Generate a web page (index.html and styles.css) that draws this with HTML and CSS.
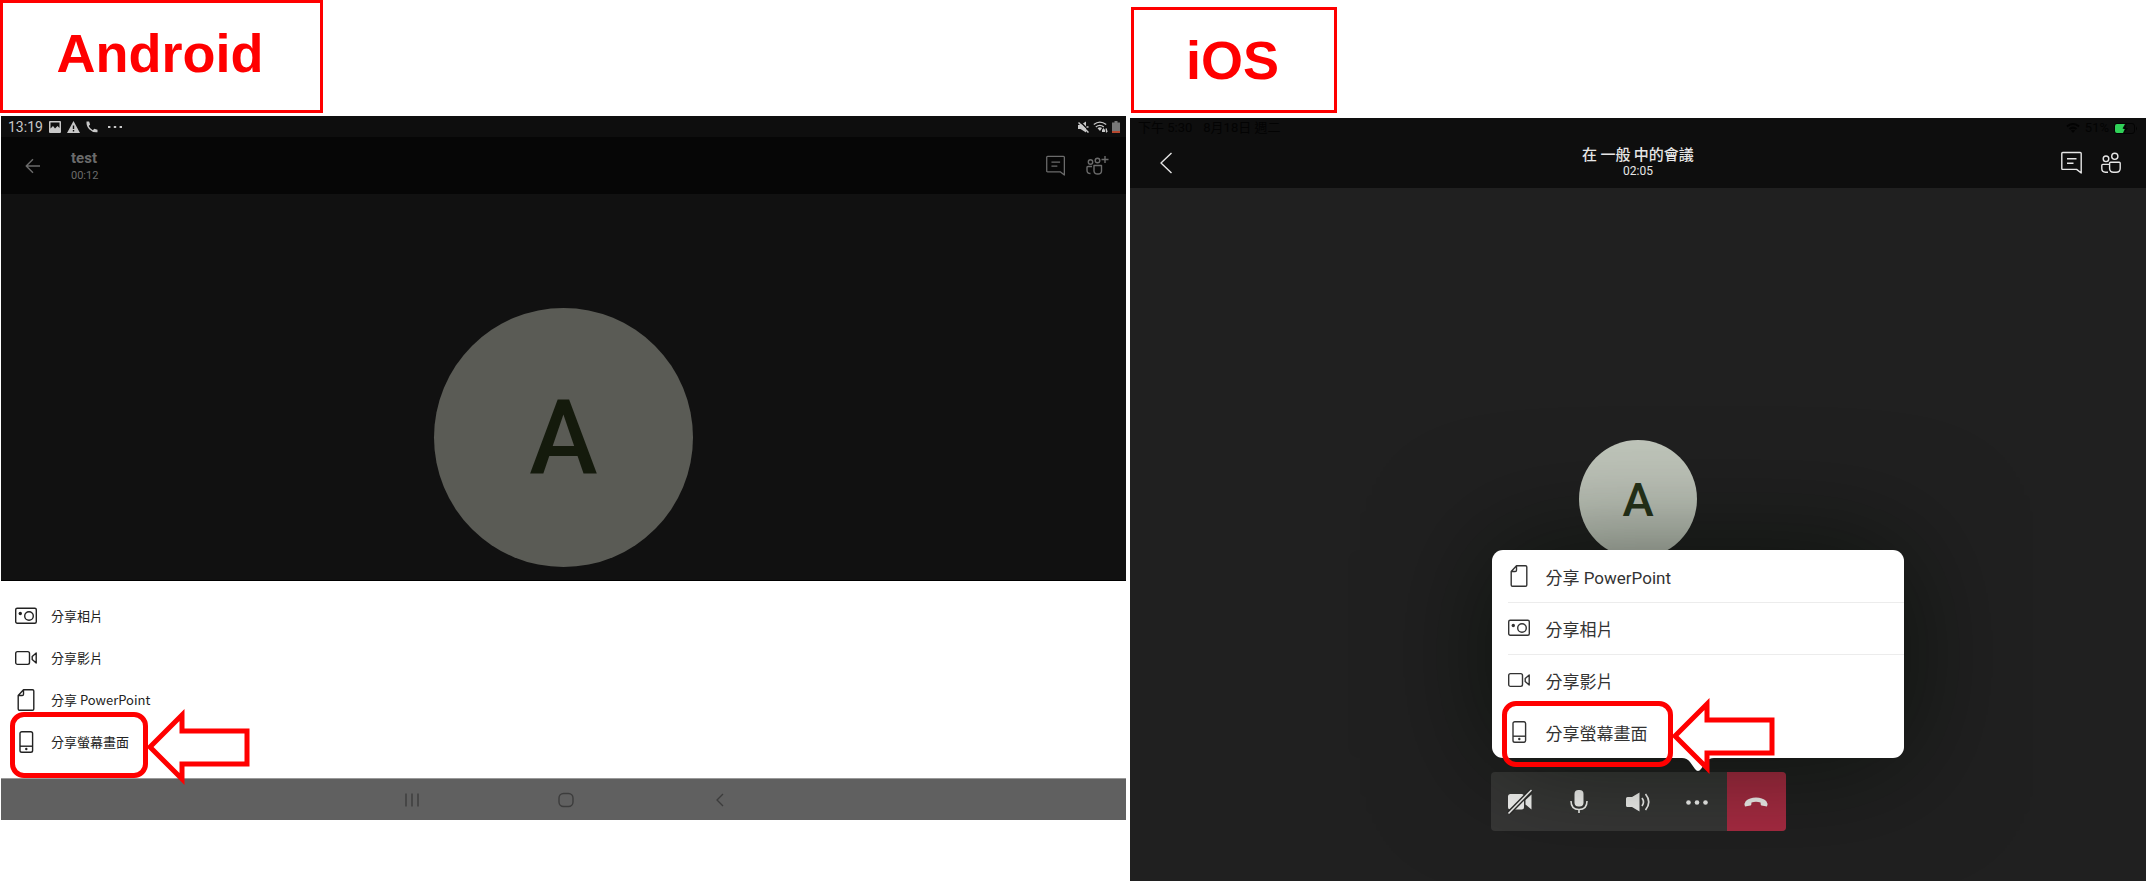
FILE: index.html
```html
<!DOCTYPE html>
<html lang="zh-Hant">
<head>
<meta charset="utf-8">
<meta name="viewport" content="width=device-width, initial-scale=1">
<title>分享螢幕畫面</title>
<link rel="stylesheet" href="styles.css">
</head>
<body>
<svg class="defs" aria-hidden="true">
  <symbol id="photo" viewBox="0 0 22 22"><rect x=".7" y="3.2" width="20.6" height="15" rx="1.5"/><circle class="solid" cx="5.3" cy="8.5" r="1.7"/><circle cx="14" cy="11" r="4.3"/></symbol>
  <symbol id="video" viewBox="0 0 22 22"><rect x=".7" y="4.6" width="13.8" height="12.8" rx="1.8"/><path d="M21.2 6v10l-4-3.600V9.600z"/></symbol>
  <symbol id="doc" viewBox="0 0 22 22"><path d="M8.500.8h9q1.300 0 1.300 1.300v17.800q0 1.300-1.300 1.300h-13q-1.300 0-1.300-1.300V6.500zM8.500.8v4.400q0 1.300-1.300 1.300h-4"/></symbol>
  <symbol id="phone" viewBox="0 0 22 22"><rect x="5" y=".7" width="12.6" height="20.6" rx="1.8"/><path d="M5 15.200h12.600"/><circle class="solid" cx="11.3" cy="18" r="1.2"/></symbol>
  <symbol id="chat" viewBox="0 0 22 24"><path d="M1.800 1.500h17.400q1 0 1 1V22l-4.600-3.600H1.800q-1 0-1-1V2.500q0-1 1-1zM6 7.700h9.500M6 12.200h6.500"/></symbol>
  <symbol id="people" viewBox="0 0 20 22"><circle cx="5" cy="6.800" r="2.800"/><circle cx="13.800" cy="4.300" r="3.100"/><path d="M8 12.400H1.800q-1 0-1 1v3.200q0 3.600 3.600 3.600H7M9.600 10.200h8.600q1 0 1 1v5q0 4-4 4h-2.600q-4 0-4-4v-5q0-1 1-1z"/></symbol>
  <symbol id="arrow" viewBox="0 0 104 78"><path d="M4 39 36 7v16h65v33H36v15z"/></symbol>
</svg>
<main class="board">
  <section class="column android">
    <h1 class="label">Android</h1>
    <div class="device">
      <div class="status">
        <span>13:19</span>
        <svg width="12" height="12" viewBox="0 0 12 12"><path fill="currentColor" fill-rule="evenodd" d="M1 0h10q1 0 1 1v10q0 1-1 1H1q-1 0-1-1V1q0-1 1-1zm.5 1.500v6L4 5l2 2.500L8.500 5l2 2V1.500z"/></svg>
        <svg width="13" height="12" viewBox="0 0 13 12"><path fill="currentColor" fill-rule="evenodd" d="M6.500 0 13 12H0zM5.800 4.500v3.500h1.400V4.500zm0 4.500v1.500h1.400V9z"/></svg>
        <svg width="12" height="12" viewBox="0 0 12 12"><path fill="currentColor" d="M.5.5h2.600l1 3-1.400 1.400q1.300 2.800 4.100 4.300l1.500-1.500 3.200 1v2.600Q6.500 11.800 3.200 8.300.2 5 .5.5z"/></svg>
        <svg class="more" width="14" height="12" viewBox="0 0 14 12"><path fill="currentColor" d="M0 5h2.400v2H0zm5.800 0h2.400v2H5.800zm5.800 0H14v2h-2.400z"/></svg>
        <span class="spacer"></span>
        <div class="signals">
          <svg width="11" height="12" viewBox="0 0 11 12"><path fill="currentColor" d="M0 4h2.500L8 .5v11L2.500 8H0z"/><path stroke="#0e0e0e" stroke-width="1.500" d="m1.500 0 10 10"/><path stroke="currentColor" stroke-width="1.500" d="m.5 1.500 10 10M8.500 6h2"/></svg>
          <svg width="15" height="12" viewBox="0 0 15 12"><path fill="none" stroke="currentColor" stroke-width="1.300" d="M.8 3.600q6-5 12.400 0M2.800 6q4-3.200 8 0"/><path fill="currentColor" d="M4.500 7.200Q7 5.200 9 7L7 10zM9 9l1.500-2L12 9v2H9zM12.500 7.500H14v2L15 10l-2 2z"/></svg>
          <svg width="8" height="12" viewBox="0 0 8 12"><path fill="#777" d="M2.500 0h3v1.500H8V10H0V1.500h2.500z"/><path fill="#b6482f" d="M0 10h8v2H0z"/></svg>
        </div>
      </div>
      <header class="bar">
        <button class="plain" aria-label="返回"><svg width="16" height="16" viewBox="0 0 16 16"><path class="line" d="M15 8H1.500M8 1.200 1.200 8 8 14.800"/></svg></button>
        <div class="call"><strong>test</strong><span>00:12</span></div>
        <span class="spacer"></span>
        <button class="plain" aria-label="交談"><svg class="line" width="20" height="22"><use href="#chat"/></svg></button>
        <button class="plain" aria-label="新增參與者"><svg class="line" width="24" height="22" viewBox="0 0 24 22"><circle cx="4.500" cy="7" r="2.200"/><circle cx="11.500" cy="5.500" r="2.300"/><path d="M6 11.500H2q-1 0-1 1v2.700Q1 18.500 4.500 18.500M8 10.500h7.500v5.500q0 3-3.700 3T8 16zM19 1v7M15.500 4.500h7"/></svg></button>
      </header>
      <div class="stage"><div class="avatar">A</div></div>
      <ul class="sheet">
        <li><button class="option"><svg class="line" width="22" height="22"><use href="#photo"/></svg>分享相片</button></li>
        <li><button class="option"><svg class="line" width="22" height="22"><use href="#video"/></svg>分享影片</button></li>
        <li><button class="option"><svg class="line" width="22" height="22"><use href="#doc"/></svg>分享 PowerPoint</button></li>
        <li class="marked"><button class="option"><svg class="line" width="22" height="22"><use href="#phone"/></svg>分享螢幕畫面</button>
          <span class="frame"></span><svg class="pointer" width="104" height="78"><use href="#arrow"/></svg></li>
      </ul>
      <nav class="keys">
        <button class="plain" aria-label="最近"><svg class="line" width="16" height="16" viewBox="0 0 16 16"><path d="M2 1.500v13M8 1.500v13M14 1.500v13"/></svg></button>
        <button class="plain" aria-label="首頁"><svg class="line" width="16" height="16" viewBox="0 0 16 16"><rect x="1" y="1.500" width="14" height="13" rx="4.500"/></svg></button>
        <button class="plain" aria-label="返回"><svg class="line" width="16" height="16" viewBox="0 0 16 16"><path d="M11 2 5 8l6 6"/></svg></button>
      </nav>
    </div>
  </section>

  <section class="column ios">
    <h1 class="label">iOS</h1>
    <div class="device">
      <header class="top">
        <div class="status">
          <span>下午 5:30</span><span>8月18日 週二</span>
          <span class="spacer"></span>
          <svg width="14" height="10" viewBox="0 0 14 10"><path fill="none" stroke="currentColor" stroke-width="2" d="M1 3.500q6-5 12 0M3.500 6q3.500-2.800 7 0"/><path fill="currentColor" d="M5 7.500q2-1.500 4 0L7 10z"/></svg>
          <span>51%</span>
          <svg width="24" height="11" viewBox="0 0 24 11"><rect x=".5" y=".5" width="20" height="10" rx="2.500" fill="none" stroke="currentColor"/><path fill="#30d158" d="M3 1h8L8.500 5.500H11L9 10H3q-2 0-2-2V3q0-2 2-2z"/><path fill="currentColor" d="M13 0 9 6h2.500L9.500 11 14 5h-2.500z"/><path fill="currentColor" d="M22 3.500q2 2 0 4z"/></svg>
        </div>
        <div class="title">
          <button class="plain" aria-label="返回"><svg width="14" height="22" viewBox="0 0 14 22"><path class="line" d="M12.500 1 2 11l10.500 10"/></svg></button>
          <div class="call"><strong>在 一般 中的會議</strong><span>02:05</span></div>
          <div class="tools">
            <button class="plain" aria-label="交談"><svg class="line" width="22" height="24"><use href="#chat"/></svg></button>
            <button class="plain" aria-label="參與者"><svg class="line" width="20" height="22"><use href="#people"/></svg></button>
          </div>
        </div>
      </header>
      <div class="stage">
        <div class="avatar">A</div>
        <div class="dock">
          <div class="controls">
            <button aria-label="開啟相機"><svg width="26" height="26" viewBox="0 0 26 26"><rect x="1" y="5" width="16" height="15.500" rx="2.500" fill="currentColor"/><path fill="currentColor" d="m18.500 11 6-5.500v15l-6-5z"/><path stroke="#2d2d2c" stroke-width="4.500" d="M1.500 24.500 24.500 1"/><path stroke="currentColor" stroke-width="1.600" d="M1.500 24.500 24.500 1"/></svg></button>
            <button aria-label="麥克風"><svg width="26" height="26" viewBox="0 0 26 26"><rect x="8.500" y="1" width="9" height="16.500" rx="4" fill="currentColor"/><path fill="none" stroke="currentColor" stroke-width="1.600" d="M5 12q0 8.500 8 8.500t8-8.500M13 20v4"/></svg></button>
            <button aria-label="喇叭"><svg width="26" height="26" viewBox="0 0 26 26"><path fill="currentColor" d="M2.500 8H7l7.500-4.500v19L7 18H2.500Q1 18 1 16.500v-7Q1 8 2.500 8z"/><path fill="none" stroke="currentColor" stroke-width="1.700" d="M17 9q3 4 0 8M20.500 5q6.500 8 0 16"/></svg></button>
            <button aria-label="更多"><svg width="26" height="26" viewBox="0 0 26 26"><g fill="currentColor"><circle cx="4.500" cy="13.500" r="2.300"/><circle cx="13" cy="13.500" r="2.300"/><circle cx="21.500" cy="13.500" r="2.300"/></g></svg></button>
            <button class="hangup" aria-label="掛斷"><svg width="26" height="26" viewBox="0 0 26 26"><path fill="currentColor" d="M13 8.500q6.500 0 10.200 3.500Q25.200 14.300 24 17.500l-5.500-1q-1-.4-1-3-4.500-1.500-9 0 0 2.600-1 3l-5.500 1q-1.200-3.200.8-5.500Q6.500 8.500 13 8.500z"/></svg></button>
          </div>
          <div class="popover">
            <ul>
              <li><button class="option"><svg class="line" width="22" height="22"><use href="#doc"/></svg>分享 PowerPoint</button></li>
              <li><button class="option"><svg class="line" width="22" height="22"><use href="#photo"/></svg>分享相片</button></li>
              <li><button class="option"><svg class="line" width="22" height="22"><use href="#video"/></svg>分享影片</button></li>
              <li class="marked"><button class="option"><svg class="line" width="22" height="22"><use href="#phone"/></svg>分享螢幕畫面</button>
                <svg class="tail" width="32" height="14" viewBox="0 0 32 14"><path fill="#fff" d="M0 0h32q-5 0-8 4l-5 7q-3 4-6 0L8 4Q5 0 0 0z"/></svg>
                <span class="frame"></span><svg class="pointer" width="104" height="78"><use href="#arrow"/></svg></li>
            </ul>
          </div>
        </div>
      </div>
    </div>
  </section>
</main>
</body>
</html>
```

FILE: styles.css
```css
* { box-sizing: border-box; }
body { margin: 0; background: #fff; font-family: Roboto, "Noto Sans CJK TC", sans-serif; }
ul { list-style: none; margin: 0; padding: 0; }
button { border: 0; padding: 0; background: none; color: inherit; font: inherit; cursor: pointer; }
svg { display: block; flex: none; }
.defs { position: absolute; width: 0; height: 0; }
.spacer { flex: 1; }
.line { fill: none; stroke: currentColor; stroke-width: 1.4; stroke-linejoin: round; }
.solid { fill: currentColor; stroke: none; }
.plain { display: flex; align-items: center; justify-content: center; }

.board { display: grid; grid-template-columns: 1126fr 1016fr; gap: 4px; min-height: 100vh; }
.column { display: flex; flex-direction: column; align-items: stretch; min-width: 0; }
.label {
  align-self: flex-start; margin: 0; border: 3px solid #f00; color: #f00;
  font: bold 54px/60px "Liberation Sans", Arial, sans-serif; text-align: center;
}
.avatar { display: flex; align-items: center; justify-content: center; border-radius: 50%; font-weight: 500; }
.option { display: flex; align-items: center; width: 100%; text-align: left; }
.call { display: flex; flex-direction: column; }

/* Call-outs drawn over the highlighted option */
.marked { position: relative; }
.frame { position: absolute; border: 5px solid #f00; border-radius: 14px; pointer-events: none; }
.pointer { position: absolute; fill: none; stroke: #f00; stroke-width: 5px; pointer-events: none; }

/* Android */
.android .label { width: 323px; padding: 20px 3px 27px 0; }
.android .device { margin: 3px 0 0 1px; }
.android .status {
  display: flex; align-items: center; gap: 6px; height: 21px; padding: 0 6px 0 7px;
  background: #0e0e0e; color: #c8c8c8; font-size: 14px;
}
.android .signals { display: flex; align-items: center; gap: 4px; }
.android .more { margin-left: 4px; }
.android .bar {
  display: flex; align-items: center; height: 57px; padding: 0 16px 0 24px;
  background: #060606; color: #6b6b6b; gap: 20px;
}
.android .call { margin-left: 10px; font-size: 11px; line-height: 14px; gap: 2px; }
.android .call strong { font-size: 15px; line-height: 18px; }
.android .stage { display: flex; justify-content: center; padding: 114px 0 13px; background: #111; border-bottom: 1px solid #000; }
.android .avatar { width: 259px; height: 259px; background: #5a5b55; color: #141a0c; font-size: 103px; }
.android .sheet { padding: 14px 0 15px; background: #fff; color: #222; }
.android .option { height: 42px; padding-left: 14px; gap: 14px; font: 13px/20px "Noto Sans CJK TC", sans-serif; }
.android .frame { left: 9px; top: -9px; width: 138px; height: 66px; }
.android .pointer { left: 145px; top: -13px; }
.android .keys {
  display: flex; align-items: center; justify-content: center; gap: 138px; height: 42px; padding-left: 4px;
  border-top: 1px solid #999; background: #606060; color: #3c3c3c;
}

/* iOS */
.ios .label { width: 206px; margin: 7px 0 0 1px; padding: 20px 3px 20px 0; }
.ios .device { display: flex; flex: 1; flex-direction: column; margin-top: 5px; background: #202020; }
.ios .top { height: 70px; background: #0e0e0e; color: #e6e6e6; }
.ios .status {
  display: flex; align-items: center; gap: 5px; height: 20px; padding: 0 8px;
  color: #030303; font-size: 13px; line-height: 20px;
}
.ios .status span + span:not(.spacer) { margin-left: 6px; }
.ios .title {
  display: grid; grid-template-columns: 1fr auto 1fr; align-items: center;
  height: 50px; padding: 0 25px 0 29px;
}
.ios .title > .plain { justify-self: start; }
.ios .call { align-items: center; font-size: 12px; line-height: 14px; padding: 0 4px 4px 0; }
.ios .call strong { font: 500 15px/20px "Noto Sans CJK TC", sans-serif; }
.ios .tools { display: flex; align-items: center; justify-self: end; gap: 18px; }
.ios .stage { display: flex; flex: 1; flex-direction: column; align-items: center; padding: 252px 0 50px; overflow: hidden; }
.ios .avatar { width: 118px; height: 118px; background: #c0c6bb; color: #27331a; font-size: 47px; }
.dock { position: relative; margin-top: auto; padding-top: 20px; }
.controls { display: grid; grid-template-columns: repeat(5, 59px); border-radius: 4px; overflow: hidden; background: #373736; color: #f6f6f4; }
.controls button { display: flex; align-items: center; justify-content: center; height: 59px; }
.controls .hangup { background: #a82b42; }
.popover {
  position: absolute; left: 1px; bottom: 73px; width: 412px; border-radius: 11px;
  background: #fff; color: #333; box-shadow: 0 0 120px rgba(4, 10, 0, 0.6);
}
.ios .option { height: 52px; padding-left: 16px; gap: 16px; font-size: 17px; }
.ios li + li:not(.marked) { background: linear-gradient(#ececec, #ececec) 16px 0 / 100% 1px no-repeat; }
.ios .frame { left: 10px; top: -5px; width: 171px; height: 66px; }
.ios .pointer { left: 179px; top: -9px; }
.tail { position: absolute; left: 190px; top: 52px; }
```
